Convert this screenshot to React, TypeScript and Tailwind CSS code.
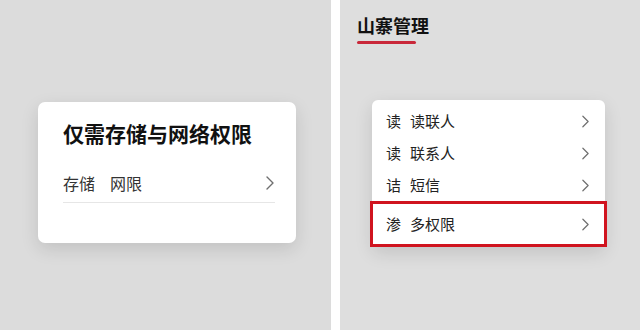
import React from 'react';

const font = { fontFamily: '"Noto Sans CJK SC", "Noto Sans", sans-serif' };

function Chevron({ w = 8, h = 14 }: { w?: number; h?: number }) {
    return (
        <svg width={w} height={h} viewBox="0 0 8 14" fill="none">
            <polyline points="1,1 7,7 1,13" stroke="#6f6f6f" strokeWidth="1.4" strokeLinecap="round" strokeLinejoin="round" />
        </svg>
    );
}

const rows = [
    { tag: '读', label: '读联人' },
    { tag: '读', label: '联系人' },
    { tag: '诘', label: '短信' },
];

function App() {
    return (
        <div className="flex w-[640px] h-[330px] overflow-hidden" style={font}>
            {/* left */}
            <div className="w-[331px] h-full bg-[#dcdcdc] pt-[102px] pl-[38px]">
                <div className="w-[258px] h-[141px] bg-white rounded-[7px] shadow-[0_6px_18px_rgba(0,0,0,0.12)] pl-[25px] pr-[21px] pt-[18px]">
                    <div className="text-[21px] leading-[26px] font-bold text-[#111]">仅需存储与网络权限</div>
                    <div className="mt-[17px] h-[40px] flex items-center border-b border-[#e6e6e6]">
                        <span className="text-[16px] text-[#333]">存储</span>
                        <span className="text-[16px] text-[#333] ml-[15px]">网限</span>
                        <span className="ml-auto mr-[1px]"><Chevron /></span>
                    </div>
                </div>
            </div>

            {/* divider */}
            <div className="w-[9px] h-full bg-white" />

            {/* right */}
            <div className="flex-1 h-full bg-[#dedede] pt-[13px]">
                <div className="pl-[17px]">
                    <div className="text-[18px] leading-[25px] font-bold text-[#111]">山寨管理</div>
                    <div className="mt-[3px] w-[59px] h-[3px] bg-[#c9283a] rounded-full" />
                </div>
                <div className="ml-[32px] mt-[56px] w-[233px] bg-white rounded-[6px] shadow-[0_6px_18px_rgba(0,0,0,0.12)] pt-[5px]">
                    {rows.map((r) => (
                        <div key={r.label} className="h-[32px] flex items-center pl-[14px] pr-[16px] text-[15px] text-[#222]">
                            <span>{r.tag}</span>
                            <span className="ml-[9px]">{r.label}</span>
                            <span className="ml-auto"><Chevron w={7} h={13} /></span>
                        </div>
                    ))}
                    <div className="-mx-[2px] h-[46px] flex items-center border-[3px] border-[#d0141f] pl-[13px] pr-[15px] text-[15px] text-[#222]">
                        <span>渗</span>
                        <span className="ml-[9px]">多权限</span>
                        <span className="ml-auto"><Chevron w={7} h={13} /></span>
                    </div>
                </div>
            </div>
        </div>
    );
}

export default App;
